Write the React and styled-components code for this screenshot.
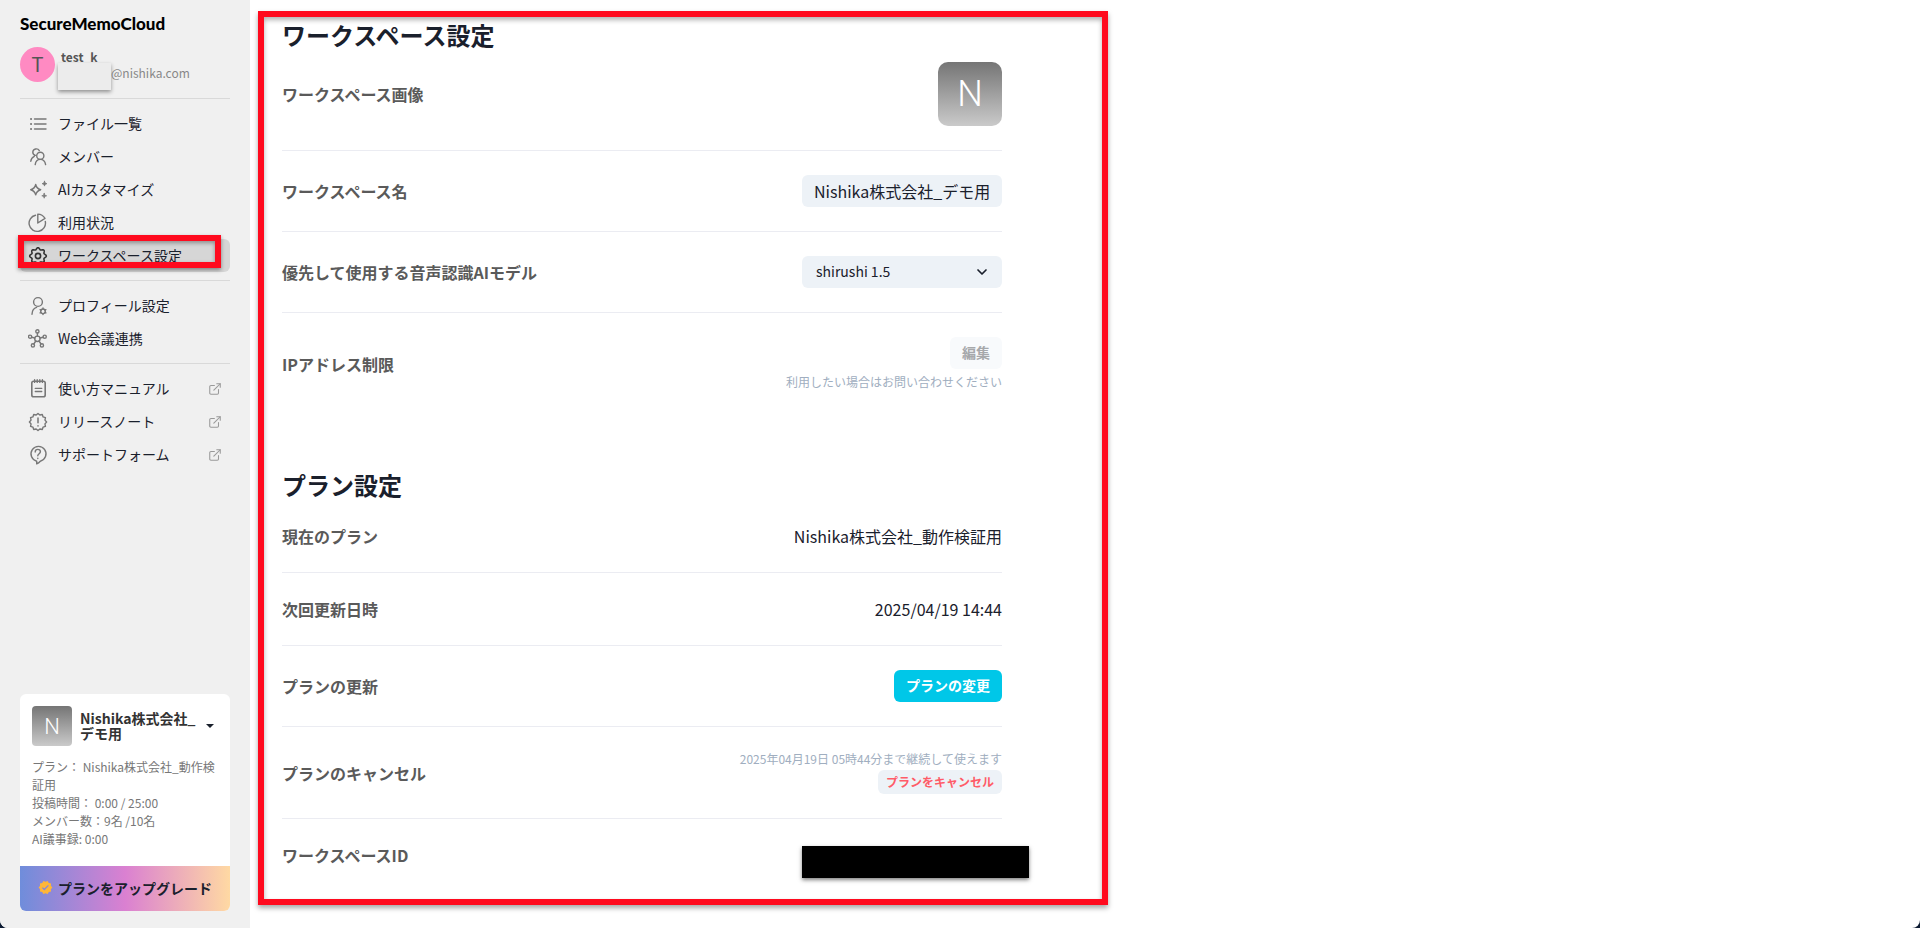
import React from "react";
import styled, { createGlobalStyle, css } from "styled-components";
import { IoSettingsOutline } from "react-icons/io5";
import { MdVerified } from "react-icons/md";
import { LuExternalLink } from "react-icons/lu";

const RED = "#ff0a1e";

const GlobalStyle = createGlobalStyle`
  *, *::before, *::after { box-sizing: border-box; }
  html { background: #0d1b33; }
  body {
    margin: 0;
    font-family: "Noto Sans CJK JP", "Noto Sans", sans-serif;
    font-size: 16px;
    line-height: 24px;
    color: #1a202c;
  }
  button, input, select { font: inherit; color: inherit; margin: 0; border: 0; }
  a { color: inherit; text-decoration: none; }
  h1, h2, p, ul { margin: 0; padding: 0; list-style: none; }
`;

const Shell = styled.div`
  display: flex;
  min-height: 100vh;
  background: #fff;
  border-radius: 0 0 8px 8px;
  overflow: hidden;
`;

const Sidebar = styled.aside`
  display: flex;
  flex-direction: column;
  flex: 0 0 250px;
  padding: 12px 20px 17px;
  background: #f0f0f0;
`;

const Logo = styled.a`
  font-family: Lato, "Liberation Sans", sans-serif;
  font-size: 17px;
  font-weight: 900;
  line-height: 24px;
  color: #000;
`;

const User = styled.div`
  display: flex;
  align-items: center;
  gap: 6px;
  height: 35px;
  margin: 11px 0 16px;
`;

const UserAvatar = styled.span`
  display: grid;
  place-items: center;
  width: 35px;
  height: 35px;
  border-radius: 50%;
  background: #ff8ac2;
  color: #555;
  font-family: Roboto, sans-serif;
  font-size: 20px;
`;

const UserText = styled.div`
  position: relative;
  flex: 1;
  font-size: 12px;
  line-height: 16px;
`;

const UserName = styled.p`
  color: #555;
  font-weight: 700;
`;

const UserMail = styled.p`
  padding-left: 50px;
  color: #888;
`;

const Mask = styled.span`
  position: absolute;
  left: -3px;
  top: 14px;
  width: 53px;
  height: 27px;
  background: #ececec;
  box-shadow: 0 2px 4px rgba(0, 0, 0, 0.4);
`;

const NavList = styled.ul`
  padding: 8px 0;
  border-top: 1px solid #d9d9d9;
`;

const NavItem = styled.li`
  position: relative;
`;

const NavLink = styled.a`
  display: flex;
  align-items: center;
  gap: 10px;
  height: 33px;
  padding: 0 8px;
  border-radius: 6px;
  font-size: 14px;
  background: ${(p) => (p.$active ? "#d6d6d6" : "transparent")};

  & > span { padding-bottom: 2px; }
  & > svg { flex: none; color: ${(p) => (p.$active ? "#333" : "#777")}; }
  & > svg:last-child:not(:first-child) { margin-left: auto; color: #999; }
`;

const NavHighlight = styled.span`
  position: absolute;
  inset: -4px 9px 4px -2px;
  border: 6px solid ${RED};
  box-shadow: 0 2px 4px rgba(0, 0, 0, 0.4), inset 0 2px 4px rgba(0, 0, 0, 0.35);
  pointer-events: none;
`;

const Card = styled.section`
  margin-top: auto;
  border-radius: 6px;
  background: #fff;
  overflow: hidden;
`;

const WorkspaceSwitch = styled.button`
  display: flex;
  align-items: center;
  gap: 8px;
  width: 100%;
  padding: 12px 16px 12px 12px;
  background: none;
  text-align: left;
  font-size: 14px;
  font-weight: 700;
  line-height: 15px;
  color: #333;

  span:nth-child(2) { flex: 1; }
`;

const WorkspaceImage = styled.span`
  display: grid;
  place-items: center;
  flex: none;
  background: linear-gradient(#757575, #cacaca);
  color: #fff;
  font-family: Roboto, sans-serif;
  font-weight: 400;
  ${(p) =>
    p.$large
      ? css`width: 64px; height: 64px; border-radius: 10px; font-size: 36px; font-weight: 300;`
      : css`width: 40px; height: 40px; border-radius: 4px; font-size: 22px; font-weight: 300;`}
`;

const Usage = styled.div`
  padding: 0 12px 18px;
  font-size: 12px;
  line-height: 18px;
  color: #777;
`;

const UpgradeButton = styled.button`
  display: flex;
  align-items: center;
  justify-content: center;
  gap: 5px;
  width: 100%;
  height: 45px;
  padding: 0 0 2px;
  background: linear-gradient(90deg, #6f8ddb, #da80d1 50%, #ffd9a3);
  font-size: 14px;
  font-weight: 700;

  svg { color: #ffb638; }
`;

const Main = styled.main`
  flex: 1;
  min-width: 0;
  padding: 11px 8px 23px;
`;

const Panel = styled.div`
  max-width: 850px;
  padding: 1px 100px 32px 18px;
  border: 6px solid ${RED};
  box-shadow: 0 3px 5px rgba(0, 0, 0, 0.35), inset 0 3px 5px rgba(0, 0, 0, 0.3);
`;

const Section = styled.section`
  & + & { margin-top: 54px; }
`;

const Title = styled.h1`
  margin-bottom: ${(p) => (p.$spaced ? "22px" : "10px")};
  font-size: 24px;
  line-height: 34px;
`;

const Row = styled.div`
  display: flex;
  align-items: center;
  justify-content: space-between;
  padding: ${(p) => (p.$first ? "0 0 24px" : p.$last ? "24px 0 0" : "24px 0")};
  border-bottom: ${(p) => (p.$plain || p.$last ? "0" : "1px solid #ebecf2")};
`;

const Label = styled.label`
  font-weight: 700;
  color: #5a5a5a;
`;

const Stack = styled.div`
  display: flex;
  flex-direction: column;
  align-items: flex-end;
  gap: ${(p) => (p.$tight ? "3px" : "5px")};
`;

const Note = styled.p`
  font-size: 12px;
  line-height: 16px;
  color: #a0aec0;
`;

const NameInput = styled.input`
  width: 200px;
  height: 32px;
  padding: 0 12px;
  border-radius: 6px;
  background: #edf2f7;
`;

const SelectBox = styled.div`
  position: relative;
  width: 200px;

  svg {
    position: absolute;
    right: 14px;
    top: 10px;
    pointer-events: none;
  }
`;

const Select = styled.select`
  appearance: none;
  display: block;
  width: 100%;
  height: 32px;
  padding: 0 32px 2px 14px;
  border-radius: 6px;
  background: #edf2f7;
  font-size: 14px;
`;

const variants = {
  primary: css`background: #00c7e8; color: #fff;`,
  muted: css`background: #f8fafc; color: #a6a8ab;`,
  danger: css`background: #edf2f7; color: #ff5c68;`,
};

const Button = styled.button`
  height: ${(p) => (p.$small ? "24px" : "32px")};
  padding: ${(p) => (p.$small ? "0 8px" : "0 12px 2px")};
  border-radius: 6px;
  font-size: ${(p) => (p.$small ? "12px" : "14px")};
  font-weight: 700;
  line-height: 18px;
  ${(p) => variants[p.$variant]}
`;

const Redacted = styled.div`
  position: relative;
  width: 200px;
  height: 24px;

  &::after {
    content: "";
    position: absolute;
    left: 0;
    top: 3px;
    width: 227px;
    height: 32px;
    background: #000;
    box-shadow: 0 2px 4px rgba(0, 0, 0, 0.5);
  }
`;

const Icon = ({ children }) => (
  <svg width="20" height="20" viewBox="0 0 20 20" fill="none" stroke="currentColor"
    strokeWidth="1.4" strokeLinecap="round" strokeLinejoin="round" aria-hidden="true">
    {children}
  </svg>
);

const ListIcon = () => (
  <Icon>
    <path d="M6.5 5H18M6.5 10H18M6.5 15H18" />
    <path d="M3 5h.1M3 10h.1M3 15h.1" strokeWidth="2" />
  </Icon>
);

const MembersIcon = () => (
  <Icon>
    <circle cx="12.3" cy="8.8" r="3.6" />
    <path d="M7.2 17.6c.4-3 2.4-5.2 5.1-5.2s4.8 2.2 5.3 5.2" />
    <path d="M11.3 3.6A3.5 3.5 0 0 0 4.8 5c0 1.7 1.1 2.9 2.5 3.4M6.3 9.3c-2 .9-3.3 2.7-3.5 5" />
  </Icon>
);

const SparklesIcon = () => (
  <Icon>
    <path d="M7.7 4.5c.7 3.2 1.9 4.4 5 5.2-3.1.8-4.3 2-5 5.2-.7-3.2-1.9-4.4-5-5.2 3.1-.8 4.3-2 5-5.2z" />
    <path d="M16.5 1.3c.3 1.5.9 2.1 2.4 2.4-1.5.3-2.1.9-2.4 2.4-.3-1.5-.9-2.1-2.4-2.4 1.5-.3 2.1-.9 2.4-2.4zM16.2 13.4c.3 1.5.9 2.1 2.4 2.4-1.5.3-2.1.9-2.4 2.4-.3-1.5-.9-2.1-2.4-2.4 1.500-.3 2.100-.9 2.400-2.400z" fill="currentColor" strokeWidth=".8" />
  </Icon>
);

const PieIcon = () => (
  <Icon>
    <path d="M7.5 2.2A8.2 8.2 0 1 0 17.3 8.5" />
    <path d="M9.8 10V1.1a8.700 8.700 0 0 1 7.200 4.300z" />
  </Icon>
);

const ProfileIcon = () => (
  <Icon>
    <circle cx="10" cy="6" r="4.4" />
    <path d="M4 18.2c.2-3.600 1.900-6.100 4.600-6.800" />
    <circle cx="15" cy="15.3" r="2.3" />
    <path d="M15 12v1M15 17.600v1M12.100 13.700l.9.5M17 16.400l.9.500M12.100 16.900l.9-.5M17 14.200l.9-.5" />
  </Icon>
);

const HubIcon = () => (
  <Icon>
    <circle cx="9.4" cy="9.8" r="2.7" />
    <circle cx="9.4" cy="2.4" r="1.6" />
    <circle cx="2.1" cy="7.7" r="1.6" />
    <circle cx="16.7" cy="7.7" r="1.6" />
    <circle cx="4.9" cy="16.4" r="1.6" />
    <circle cx="13.9" cy="16.4" r="1.6" />
    <path d="M9.4 4v3.1M3.7 8.2l3.1.8M12 9l3.1-.8M7.8 12l-2 3M11 12l2 3" />
  </Icon>
);

const ManualIcon = () => (
  <Icon>
    <rect x="3.8" y="2.2" width="13.4" height="15.6" rx="1.8" strokeWidth="1.6" />
    <path d="M6.6.8v2.6M9.2.8v2.6M11.800.8v2.600M14.400.8v2.600M7.300 9.400h6.400M7.300 12.500h6.400" />
  </Icon>
);

const badgePoints = Array.from({ length: 24 }, (_, i) => {
  const a = (Math.PI * i) / 12;
  const r = i % 2 ? 7.2 : 8.6;
  return `${(10 + r * Math.sin(a)).toFixed(2)},${(10 - r * Math.cos(a)).toFixed(2)}`;
}).join(" ");

const ReleaseIcon = () => (
  <Icon>
    <polygon points={badgePoints} />
    <path d="M10 6v4.800M10 13.700v.2" strokeWidth="1.5" />
  </Icon>
);

const SupportIcon = () => (
  <Icon>
    <path d="M8.7 16.2v2.7c1.300-.6 2.500-1.500 3.600-2.700A7.500 7.500 0 1 0 8.700 16.200z" />
    <path d="M7.200 7c0-1.600 1.100-2.600 2.600-2.600s2.600 1 2.600 2.400c0 1.800-2.600 2-2.600 4M9.800 13.300v.2" />
  </Icon>
);

const gearPath = (() => {
  const pts = [];
  for (let i = 0; i <= 96; i++) {
    const a = (Math.PI * 2 * i) / 96;
    const r = 7.4 + 0.9 * Math.cos(8 * a);
    pts.push(`${(10 + r * Math.sin(a)).toFixed(2)} ${(10 - r * Math.cos(a)).toFixed(2)}`);
  }
  return `M${pts.join("L")}Z`;
})();

const GearIcon = () => (
  <Icon>
    <path d={gearPath} strokeWidth="1.6" />
    <circle cx="10" cy="10" r="2.6" strokeWidth="1.6" />
  </Icon>
);

const ChevronIcon = () => (
  <svg width="12" height="12" viewBox="0 0 12 12" fill="none" stroke="currentColor"
    strokeWidth="1.7" strokeLinecap="round" strokeLinejoin="round" aria-hidden="true">
    <path d="M2 4l4 4 4-4" />
  </svg>
);

const CaretIcon = () => (
  <svg width="8" height="4" viewBox="0 0 8 4" fill="#1a202c" aria-hidden="true">
    <path d="M0 0h8L4 4z" />
  </svg>
);

const groups = [
  [
    { text: "ファイル一覧", icon: ListIcon },
    { text: "メンバー", icon: MembersIcon },
    { text: "AIカスタマイズ", icon: SparklesIcon },
    { text: "利用状況", icon: PieIcon },
    { text: "ワークスペース設定", icon: GearIcon, active: true },
  ],
  [
    { text: "プロフィール設定", icon: ProfileIcon },
    { text: "Web会議連携", icon: HubIcon },
  ],
  [
    { text: "使い方マニュアル", icon: ManualIcon, external: true },
    { text: "リリースノート", icon: ReleaseIcon, external: true },
    { text: "サポートフォーム", icon: SupportIcon, external: true },
  ],
];

export default function App() {
  return (
    <>
      <GlobalStyle />
      <Shell>
        <Sidebar>
          <Logo href="#">SecureMemoCloud</Logo>
          <User>
            <UserAvatar>T</UserAvatar>
            <UserText>
              <UserName>test_k</UserName>
              <UserMail>@nishika.com</UserMail>
              <Mask />
            </UserText>
          </User>
          <nav>
            {groups.map((items, i) => (
              <NavList key={i}>
                {items.map(({ text, icon: Glyph, active, external }) => (
                  <NavItem key={text}>
                    <NavLink href="#" $active={active}>
                      <Glyph />
                      <span>{text}</span>
                      {external && <LuExternalLink size={14} strokeWidth={1.8} aria-hidden="true" />}
                    </NavLink>
                    {active && <NavHighlight />}
                  </NavItem>
                ))}
              </NavList>
            ))}
          </nav>
          <Card>
            <WorkspaceSwitch type="button">
              <WorkspaceImage>N</WorkspaceImage>
              <span>Nishika株式会社_デモ用</span>
              <CaretIcon />
            </WorkspaceSwitch>
            <Usage>
              <p>プラン： Nishika株式会社_動作検証用</p>
              <p>投稿時間： 0:00 / 25:00</p>
              <p>メンバー数：9名 /10名</p>
              <p>AI議事録: 0:00</p>
            </Usage>
            <UpgradeButton type="button">
              <MdVerified size={15} aria-hidden="true" />
              プランをアップグレード
            </UpgradeButton>
          </Card>
        </Sidebar>
        <Main>
          <Panel>
            <Section>
              <Title>ワークスペース設定</Title>
              <Row $first>
                <Label as="span">ワークスペース画像</Label>
                <WorkspaceImage $large>N</WorkspaceImage>
              </Row>
              <Row>
                <Label htmlFor="workspace-name">ワークスペース名</Label>
                <NameInput id="workspace-name" type="text" defaultValue="Nishika株式会社_デモ用" />
              </Row>
              <Row>
                <Label htmlFor="ai-model">優先して使用する音声認識AIモデル</Label>
                <SelectBox>
                  <Select id="ai-model">
                    <option>shirushi 1.5</option>
                  </Select>
                  <ChevronIcon />
                </SelectBox>
              </Row>
              <Row $plain>
                <Label as="span">IPアドレス制限</Label>
                <Stack>
                  <Button type="button" $variant="muted" disabled>編集</Button>
                  <Note>利用したい場合はお問い合わせください</Note>
                </Stack>
              </Row>
            </Section>
            <Section>
              <Title as="h2" $spaced>プラン設定</Title>
              <Row $first>
                <Label as="span">現在のプラン</Label>
                <span>Nishika株式会社_動作検証用</span>
              </Row>
              <Row>
                <Label as="span">次回更新日時</Label>
                <span>2025/04/19 14:44</span>
              </Row>
              <Row>
                <Label as="span">プランの更新</Label>
                <Button type="button" $variant="primary">プランの変更</Button>
              </Row>
              <Row>
                <Label as="span">プランのキャンセル</Label>
                <Stack $tight>
                  <Note>2025年04月19日 05時44分まで継続して使えます</Note>
                  <Button type="button" $variant="danger" $small>プランをキャンセル</Button>
                </Stack>
              </Row>
              <Row $last>
                <Label as="span">ワークスペースID</Label>
                <Redacted />
              </Row>
            </Section>
          </Panel>
        </Main>
      </Shell>
    </>
  );
}
